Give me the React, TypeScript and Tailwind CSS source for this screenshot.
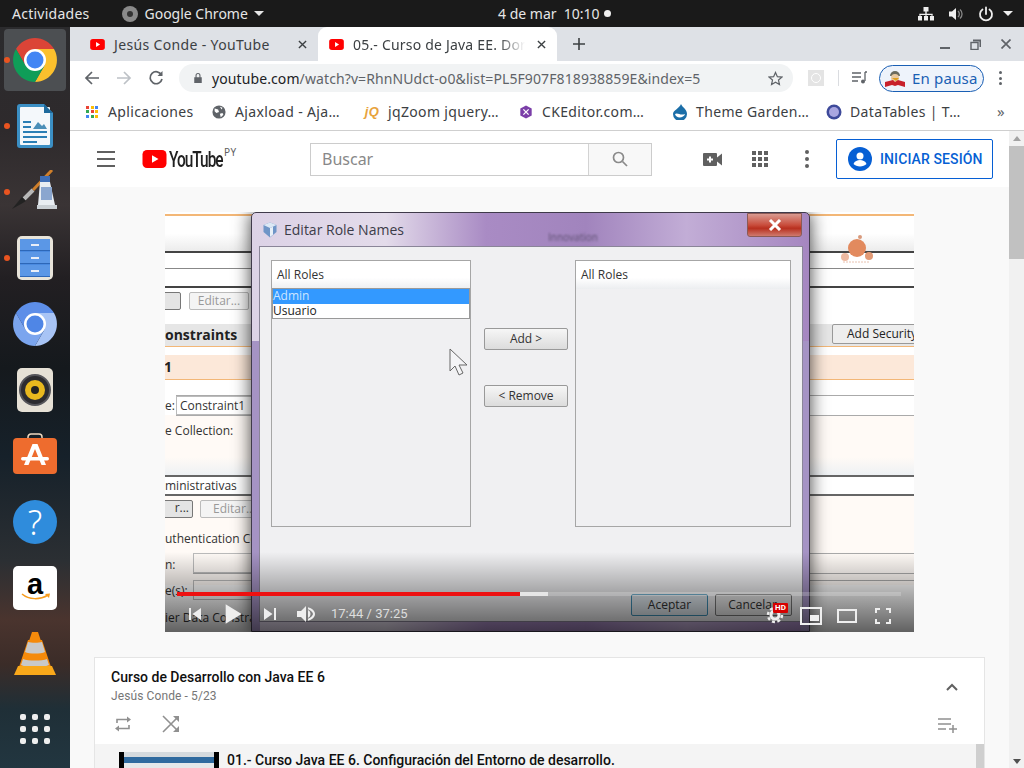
import type { ReactNode } from 'react';

const YtFavicon = ({ className = '' }: { className?: string }) => (
  <svg viewBox="0 0 16 12" className={className}>
    <rect width="16" height="12" rx="3" fill="#f00" />
    <path d="M6.4 3.2 10.8 6 6.4 8.8z" fill="#fff" />
  </svg>
);

const ChromeLogo = ({ colors, size }: { colors: string[]; size: number }) => (
  <svg viewBox="0 0 48 48" width={size} height={size}>
    <path d="M5 13A22 22 0 0 1 43 13L24 13 24 24 14.500 29.500Z" fill={colors[0]} />
    <path d="M43 13A22 22 0 0 1 24 46L33.500 29.500 24 24 24 13Z" fill={colors[1]} />
    <path d="M24 46A22 22 0 0 1 5 13L14.500 29.500 24 24 33.500 29.500Z" fill={colors[2]} />
    <circle cx="24" cy="24" r="11" fill="#fff" />
    <circle cx="24" cy="24" r="8.500" fill={colors[3]} />
  </svg>
);

function TopBar() {
  return (
    <div className="h-[27px] bg-[#1a1a1a] flex items-center text-[14px] text-[#e6e6e6] relative font-['Noto_Sans',sans-serif]">
      <span className="ml-3 tracking-[0.25px]">Actividades</span>
      <span className="ml-[33px] flex items-center">
        <span className="w-4 h-4 rounded-full bg-[#8a8a8a] flex items-center justify-center">
          <span className="w-[6px] h-[6px] rounded-full bg-[#333]" />
        </span>
        <span className="ml-[6px]">Google Chrome</span>
        <span className="ml-[6px] border-x-[5px] border-x-transparent border-t-[5px] border-t-[#e6e6e6]" />
      </span>
      <span className="absolute left-[498px] flex items-center">
        4 de mar&nbsp;&nbsp;10:10
        <span className="ml-[4px] w-[7px] h-[7px] rounded-full bg-[#eee]" />
      </span>
      <span className="ml-auto flex items-center mr-[11px]">
        <svg viewBox="0 0 16 14" className="w-4 h-[14px] fill-[#eee]">
          <path d="M5.500 0h5v4.500h-5zM7.300 4.500h1.400v2.300h6v2h-1.400v-.8H8.700v.8H7.300V8H2.700v.8H1.300v-2h6zM0 9h4v4.500H0zM6 9h4v4.500H6zM12 9h4v4.500h-4z" />
        </svg>
        <svg viewBox="0 0 16 16" className="w-4 h-4 ml-[14px]">
          <path d="M1 5.500h3L8 2v12L4 10.500H1z" fill="#eee" />
          <path d="M10 5a4 4 0 0 1 0 6M12 3.500a6 6 0 0 1 0 9" stroke="#888" strokeWidth="1.300" fill="none" />
        </svg>
        <svg viewBox="0 0 16 16" className="w-4 h-4 ml-[14px]" fill="none" stroke="#eee" strokeWidth="1.800" strokeLinecap="round">
          <path d="M8 1.500V8M4.500 3.500a6 6 0 1 0 7 0" />
        </svg>
        <span className="ml-[9px] border-x-[5px] border-x-transparent border-t-[5px] border-t-[#eee]" />
      </span>
    </div>
  );
}

function DockCell({ dot, children }: { dot?: boolean; children: ReactNode }) {
  return (
    <div className="h-[66px] flex items-center justify-center relative">
      {dot && <span className="absolute left-[4px] top-[30px] w-[6px] h-[6px] rounded-full bg-[#e95420]" />}
      {children}
    </div>
  );
}

function Dock() {
  return (
    <div className="w-[70px] flex flex-col shrink-0 bg-[linear-gradient(180deg,#2b2b2d_0%,#2e2a2c_14%,#3a3435_24%,#221f22_34%,#15191d_46%,#16212a_58%,#2b2f33_72%,#4a342e_80%,#3b2c28_86%,#1f2f37_92%,#223640_100%)]">
      <DockCell dot>
        <div className="w-[62px] h-[62px] rounded-[4px] bg-[#4c4f52] flex items-center justify-center">
          <ChromeLogo size={48} colors={['#db4437', '#fbc02d', '#0f9d58', '#4285f4']} />
        </div>
      </DockCell>
      <DockCell dot>
        <svg viewBox="0 0 36 44" className="w-9 h-11">
          <path d="M3 0h24l9 9v32a3 3 0 0 1-3 3H3a3 3 0 0 1-3-3V3a3 3 0 0 1 3-3z" fill="#3b8fc4" />
          <rect x="3" y="3" width="30" height="38" rx="1" fill="#f4f8fb" />
          <path d="M27 0l9 9h-9z" fill="#1e6a9c" />
          <path d="M6 17h8v2H6zM6 22h8v2H6zM6 27h24v2H6zM6 32h24v2H6zM6 37h14v2H6z" fill="#2b7fb5" />
          <path d="M16 25l5-7 4 4 2-2 3 5z" fill="#4b8fb8" />
        </svg>
      </DockCell>
      <DockCell dot>
        <svg viewBox="0 0 46 44" className="w-[46px] h-11">
          <path d="M40 0 21 20" stroke="#d07f2a" strokeWidth="3" fill="none" />
          <path d="M21 20 12 29" stroke="#b8b8b8" strokeWidth="4" fill="none" />
          <path d="M10 27l4 4-5 3-9 5z" fill="#222" />
          <rect x="28" y="6" width="10" height="6" fill="#3f6eb5" />
          <path d="M28 12h10l5 23H26z" fill="#e8edf2" />
          <rect x="29" y="17" width="11" height="13" fill="#8aa6cf" />
          <rect x="25" y="35" width="20" height="4" fill="#c9cfd4" />
        </svg>
      </DockCell>
      <DockCell dot>
        <div className="w-9 h-11 rounded-[5px] bg-[#e8e4da] p-[3px]">
          <div className="h-full rounded-[2px] bg-[#4a8ae0] flex flex-col gap-[1px]">
            {[0, 1, 2].map((i) => (
              <div key={i} className="flex-1 bg-[#5b97e6] border-b border-[#2d67b8] flex items-center justify-center">
                <span className="w-2 h-[2px] bg-[#e8eef8]" />
              </div>
            ))}
          </div>
        </div>
      </DockCell>
      <DockCell>
        <ChromeLogo size={48} colors={['#5d8ee8', '#a8c4f5', '#7ba5ee', '#4f86e6']} />
      </DockCell>
      <DockCell>
        <div className="w-9 h-[44px] rounded-[5px] bg-[#e6e1d6] flex items-center justify-center">
          <div className="w-8 h-8 rounded-full bg-[#2c2c30] border-2 border-[#55555a] flex items-center justify-center">
            <div className="w-5 h-5 rounded-full bg-[#e8b81e] flex items-center justify-center">
              <div className="w-[8px] h-[8px] rounded-full bg-[#222]" />
            </div>
          </div>
        </div>
      </DockCell>
      <DockCell>
        <svg viewBox="0 0 44 46" className="w-11 h-[46px]">
          <path d="M15 8V4a3 3 0 0 1 3-3h8a3 3 0 0 1 3 3v4" fill="none" stroke="#f0d9c0" strokeWidth="1.500" />
          <rect y="5" width="44" height="36" rx="4" fill="#ee6c2e" />
          <path d="M19.500 11h5L33 32h-4.500l-6.500-16-6.500 16H11z" fill="#fff" />
          <rect x="8" y="24" width="28" height="3.500" rx="1.700" fill="#fff" />
        </svg>
      </DockCell>
      <DockCell>
        <div className="w-11 h-11 rounded-full bg-[#2f8cdc] flex items-center justify-center text-white text-[34px] leading-none font-light font-['Noto_Sans',sans-serif]">
          ?
        </div>
      </DockCell>
      <DockCell>
        <div className="w-11 h-11 rounded-[5px] bg-white flex flex-col items-center justify-center relative">
          <span className="text-black font-bold text-[29px] leading-[26px] font-['Liberation_Sans',sans-serif] mt-[-8px]">a</span>
          <svg viewBox="0 0 30 8" className="w-[30px] h-2 absolute top-[27px] left-[8px]">
            <path d="M1 1c7 6 18 6 26 1" fill="none" stroke="#f79c1d" strokeWidth="1.500" />
            <path d="M24 1l5-.5-1 4.500z" fill="#f79c1d" />
          </svg>
        </div>
      </DockCell>
      <DockCell>
        <svg viewBox="0 0 42 44" className="w-[42px] h-11">
          <path d="M14 8h14l10 30H4z" fill="#f58a0b" />
          <path d="M18 0h6l3 9c-2 1-10 1-12 0z" fill="#f58a0b" />
          <path d="M14 10c3 1 11 1 14 0l3 10c-4 2-16 2-20 0z" fill="#c9c9c9" />
          <path d="M9 27c5 2 19 2 24 0l2 6c-6 3-22 3-28 0z" fill="#c9c9c9" />
          <path d="M4 34h34l4 9H0z" fill="#f9a81a" />
        </svg>
      </DockCell>
      <div className="mt-[10px] mx-auto grid grid-cols-3 gap-x-[6px] gap-y-[6px] pt-[17px]">
        {Array.from({ length: 9 }).map((_, i) => (
          <span key={i} className="w-[6px] h-[6px] rounded-[2px] bg-[#eee]" />
        ))}
      </div>
    </div>
  );
}

function TabStrip() {
  return (
    <div className="h-[34px] bg-[#dee1e6] flex items-stretch relative text-[14px] text-[#3c4043]">
      <div className="w-[248px] flex items-center pl-[20px] shrink-0">
        <YtFavicon className="w-[15px] h-[11px]" />
        <span className="ml-[9px] tracking-[0.35px]">Jesús Conde - YouTube</span>
        <svg viewBox="0 0 10 10" className="w-[9px] h-[9px] ml-[28px]" stroke="#3c4043" strokeWidth="1.500">
          <path d="M1 1l8 8M9 1l-8 8" />
        </svg>
      </div>
      <div className="w-[239px] bg-white rounded-t-[9px] flex items-center pl-[11px] shrink-0">
        <YtFavicon className="w-[15px] h-[11px]" />
        <span className="ml-[9px] w-[172px] whitespace-nowrap tracking-[0.2px] [mask-image:linear-gradient(90deg,#000_85%,transparent)]">
          05.- Curso de Java EE. Dor
        </span>
        <svg viewBox="0 0 10 10" className="w-[9px] h-[9px] ml-[12px]" stroke="#3c4043" strokeWidth="1.500">
          <path d="M1 1l8 8M9 1l-8 8" />
        </svg>
      </div>
      <svg viewBox="0 0 12 12" className="w-3 h-3 ml-[16px] self-center" stroke="#3c4043" strokeWidth="1.600">
        <path d="M6 0v12M0 6h12" />
      </svg>
      <div className="ml-auto flex items-center mr-[13px] gap-[20px]">
        <span className="w-[10px] h-[2px] bg-[#5f6368] mt-[7px]" />
        <svg viewBox="0 0 11 11" className="w-[11px] h-[11px]" fill="none" stroke="#5f6368" strokeWidth="1.400">
          <rect x="1" y="3.500" width="7" height="7" />
          <path d="M3 1.500h7.500V8" strokeWidth="2" />
        </svg>
        <svg viewBox="0 0 10 10" className="w-[10px] h-[10px]" stroke="#5f6368" strokeWidth="1.700">
          <path d="M.5.500l9 9M9.500.500l-9 9" />
        </svg>
      </div>
    </div>
  );
}

function Toolbar() {
  return (
    <div className="h-[34px] bg-white flex items-center text-[14px]">
      <svg viewBox="0 0 16 16" className="w-4 h-4 ml-[14px]" fill="none" stroke="#5f6368" strokeWidth="1.700">
        <path d="M15 8H2M8 2 2 8l6 6" />
      </svg>
      <svg viewBox="0 0 16 16" className="w-4 h-4 ml-[16px]" fill="none" stroke="#bdc1c6" strokeWidth="1.700">
        <path d="M1 8h13M8 2l6 6-6 6" />
      </svg>
      <svg viewBox="0 0 16 16" className="w-4 h-4 ml-[16px]" fill="none" stroke="#5f6368" strokeWidth="1.700">
        <path d="M13.500 5A6 6 0 1 0 14 9" />
        <path d="M14.500 1v5h-5z" fill="#5f6368" stroke="none" />
      </svg>
      <div className="ml-[15px] w-[614px] h-[28px] rounded-full bg-[#f1f3f4] flex items-center">
        <svg viewBox="0 0 12 14" className="w-[10px] h-[12px] ml-[14px]">
          <path d="M3 6V4a3 3 0 0 1 6 0v2h1.500v7h-9V6zm1.300 0h3.400V4a1.700 1.700 0 0 0-3.400 0z" fill="#5f6368" />
        </svg>
        <span className="ml-[9px] text-[#202124] tracking-[0.1px]">
          youtube.com<span className="text-[#5f6368]">/watch?v=RhnNUdct-o0&amp;list=PL5F907F818938859E&amp;index=5</span>
        </span>
        <svg viewBox="0 0 16 16" className="w-[15px] h-[15px] ml-auto mr-[10px]" fill="none" stroke="#5f6368" strokeWidth="1.300">
          <path d="M8 1.500 10 6l4.800.5-3.600 3.200 1 4.800L8 12l-4.200 2.500 1-4.800L1.200 6.500 6 6z" />
        </svg>
      </div>
      <div className="w-4 h-4 ml-[15px] bg-[#e4e4e4] flex items-center justify-center shrink-0">
        <span className="w-[10px] h-[10px] rounded-full border border-white" />
      </div>
      <span className="w-px h-4 bg-[#dadce0] ml-[14px]" />
      <svg viewBox="0 0 16 14" className="w-4 h-[14px] ml-[13px]" fill="none" stroke="#5f6368" strokeWidth="1.300">
        <path d="M0 2h9M0 6h9M0 10h6M13 1h2M13 1v9" />
        <circle cx="11" cy="10.500" r="2" fill="#5f6368" stroke="none" />
      </svg>
      <div className="ml-[11px] w-[105px] h-[27px] rounded-full border border-[#1a5fb4] bg-[#eef3fb] flex items-center">
        <svg viewBox="0 0 24 22" className="w-6 h-[22px] ml-[3px]">
          <path d="M7 9a5 5 0 0 1 10 0z" fill="#6b6b5e" />
          <circle cx="12" cy="11" r="4" fill="#e8c9a0" />
          <path d="M9 11h7l-3 3z" fill="#e0a020" />
          <path d="M2 15l8-2 2 2 3-2 7 2v5l-7-2-3 1-3-1-7 2z" fill="#c8202a" />
        </svg>
        <span className="ml-[5px] text-[15px] text-[#1a5fb4] tracking-[0.2px]">En pausa</span>
      </div>
      <div className="ml-[15px] flex flex-col gap-[2.500px]">
        {[0, 1, 2].map((i) => (
          <span key={i} className="w-[3px] h-[3px] rounded-full bg-[#5f6368]" />
        ))}
      </div>
    </div>
  );
}

function Bookmark({ w, icon, label }: { w: number; icon: ReactNode; label: string }) {
  return (
    <div className="flex items-center shrink-0 whitespace-nowrap" style={{ width: w }}>
      <span className="w-4 h-4 flex items-center justify-center shrink-0">{icon}</span>
      <span className="ml-[8px]">{label}</span>
    </div>
  );
}

function BookmarksBar() {
  const appColors = ['#ea4335', '#fbbc04', '#4285f4', '#34a853', '#ea4335', '#fbbc04', '#4285f4', '#34a853', '#fbbc04'];
  return (
    <div className="h-[36px] pb-[2px] bg-white border-b border-[#cfcfcf] flex items-center pl-[14px] text-[14px] text-[#3c4043] relative tracking-[0.35px]">
      <Bookmark
        w={127}
        icon={
          <span className="grid grid-cols-3 gap-[1.500px]">
            {appColors.map((c, i) => (
              <span key={i} className="w-[3px] h-[3px]" style={{ backgroundColor: c }} />
            ))}
          </span>
        }
        label="Aplicaciones"
      />
      <Bookmark
        w={153}
        icon={
          <svg viewBox="0 0 16 16" className="w-[14px] h-[14px]">
            <circle cx="8" cy="8" r="7.500" fill="#5f6368" />
            <path d="M3 4l4 1 1 3-3 1-2-2zM9 10l3-1 1 2-3 3zM9 2l3 1-1 2z" fill="#fff" />
          </svg>
        }
        label="Ajaxload - Aja…"
      />
      <Bookmark
        w={154}
        icon={
          <span className="text-[#e8a33d] text-[13px] font-bold italic font-['Liberation_Sans',sans-serif]">jQ</span>
        }
        label="jqZoom jquery…"
      />
      <Bookmark
        w={154}
        icon={
          <svg viewBox="0 0 16 16" className="w-[14px] h-[14px]">
            <path d="M8 .500 14.500 4v8L8 15.500 1.500 12V4z" fill="#7b3fa8" />
            <path d="M5 5l6 6M11 5l-6 6" stroke="#fff" strokeWidth="1.500" />
          </svg>
        }
        label="CKEditor.com…"
      />
      <Bookmark
        w={154}
        icon={
          <svg viewBox="0 0 16 16" className="w-4 h-4">
            <path d="M9 0c1 3 6 5 6 10a7 7 0 0 1-14 0c0-4 6-5 8-10z" fill="#1b6ea8" />
            <path d="M3 10c3-2 5 2 10 0-1 4-9 5-10 0z" fill="#fff" />
          </svg>
        }
        label="Theme Garden…"
      />
      <Bookmark
        w={150}
        icon={
          <svg viewBox="0 0 16 16" className="w-4 h-4">
            <circle cx="8" cy="8" r="7.500" fill="#3e4a9a" />
            <circle cx="8" cy="8" r="5" fill="#a9a6e0" />
          </svg>
        }
        label="DataTables | T…"
      />
      <span className="absolute left-[927px] top-[5px] text-[#5f6368] text-[15px]">»</span>
    </div>
  );
}

function YouTubeHeader() {
  return (
    <div className="h-[56px] bg-white flex items-center shrink-0 text-[#606060]">
      <div className="ml-[27px] flex flex-col gap-[5px]">
        {[0, 1, 2].map((i) => (
          <span key={i} className="w-[18px] h-[2px] bg-[#606060]" />
        ))}
      </div>
      <svg viewBox="0 0 24 18" className="w-[25px] h-[18px] ml-[27px]">
        <rect width="24" height="18" rx="4.500" fill="#f00" />
        <path d="M9.500 5.300 16 9l-6.500 3.700z" fill="#fff" />
      </svg>
      <span className="ml-[2px] w-[55px] whitespace-nowrap text-[22px] font-medium text-[#212121] tracking-[-1.400px] font-['Roboto',sans-serif] scale-x-[0.7] origin-left">YouTube</span>
      <span className="text-[10px] mb-[14px] w-[14px] tracking-[0.5px]">PY</span>
      <div className="ml-[72px] w-[342px] h-[33px] flex border border-[#ccc]">
        <div className="w-[277px] bg-white pl-[11px] text-[16px] text-[#888] flex items-center">Buscar</div>
        <div className="flex-1 bg-[#f8f8f8] border-l border-[#d3d3d3] flex items-center justify-center">
          <svg viewBox="0 0 16 16" className="w-4 h-4" fill="none" stroke="#8a8a8a" strokeWidth="1.700">
            <circle cx="6.500" cy="6.500" r="5" />
            <path d="M10.500 10.500 15 15" />
          </svg>
        </div>
      </div>
      <svg viewBox="0 0 19 13" className="w-[19px] h-[13px] ml-[51px]">
        <path d="M1 0h12a1 1 0 0 1 1 1v3.500L19 .500v12l-5-4V12a1 1 0 0 1-1 1H1a1 1 0 0 1-1-1V1a1 1 0 0 1 1-1z" fill="#606060" />
        <path d="M6 3.500h2V5.500h2v2H8v2H6v-2H4v-2h2z" fill="#fff" />
      </svg>
      <div className="ml-[30px] grid grid-cols-3 gap-[2px]">
        {Array.from({ length: 9 }).map((_, i) => (
          <span key={i} className="w-[4px] h-[4px] bg-[#606060]" />
        ))}
      </div>
      <div className="ml-[37px] flex flex-col gap-[3px]">
        {[0, 1, 2].map((i) => (
          <span key={i} className="w-[4px] h-[4px] rounded-full bg-[#606060]" />
        ))}
      </div>
      <div className="ml-[27px] w-[157px] h-[40px] border border-[#065fd4] rounded-[2px] flex items-center text-[#065fd4] font-medium text-[14px] font-['Roboto',sans-serif]">
        <svg viewBox="0 0 24 24" className="w-6 h-6 ml-[11px]">
          <circle cx="12" cy="12" r="12" fill="#065fd4" />
          <circle cx="12" cy="9" r="3.500" fill="#fff" />
          <path d="M5.500 17c1-3 4-4 6.500-4s5.500 1 6.500 4c-1.500 1.500-4 2.500-6.500 2.500S7 18.500 5.500 17z" fill="#fff" />
        </svg>
        <span className="ml-[8px] tracking-[0.1px]">INICIAR SESIÓN</span>
      </div>
    </div>
  );
}

const bgLines = [
  { top: 2, left: 0, cls: 'h-[1.500px] bg-[#f3b777]' },
  { top: 39, left: 0, cls: 'h-[2px] bg-[#444]' },
  { top: 56, left: 0, cls: 'h-px bg-[#888]' },
  { top: 74, left: 0, cls: 'h-[2px] bg-[#444]' },
  { top: 134, left: 0, cls: 'h-px bg-[#f3b777]' },
  { top: 167, left: 0, cls: 'h-px bg-[#f3b777]' },
  { top: 183, left: 11, cls: 'h-px bg-[#aaa]' },
  { top: 203, left: 11, cls: 'h-px bg-[#aaa]' },
  { top: 263, left: 0, cls: 'h-[2px] bg-[#666]' },
  { top: 282, left: 0, cls: 'h-[2px] bg-[#666]' },
  { top: 341, left: 28, cls: 'h-px bg-[#aaa]' },
  { top: 361, left: 28, cls: 'h-px bg-[#aaa]' },
  { top: 368, left: 28, cls: 'h-px bg-[#aaa]' },
];

function VideoBackground() {
  return (
    <div className="absolute inset-0 bg-white text-[12px] text-[#333] font-['Open_Sans',sans-serif] whitespace-nowrap overflow-hidden">
      <div className="absolute left-0 right-0 top-[4px] h-[35px] bg-[linear-gradient(180deg,#fff_50%,#ececec)]" />
      <div className="absolute left-0 right-0 top-[112px] h-[22px] bg-[#e6e6e6]" />
      <div className="absolute left-0 right-0 top-[143px] h-[24px] bg-[#fce8d9]" />
      <div className="absolute left-0 right-0 top-[203px] h-[60px] bg-[linear-gradient(180deg,#fffaf6,#fffaf6_70%,#eef1f4)]" />
      <div className="absolute left-0 right-0 top-[283px] h-[90px] bg-[#fffaf6]" />
      {bgLines.map((l) => (
        <div key={l.top} className={`absolute right-0 ${l.cls}`} style={{ top: l.top, left: l.left }} />
      ))}
      <div className="absolute left-[-10px] top-[80px] w-[26px] h-[18px] rounded-[2px] border border-[#777] bg-[#e4e4e4]" />
      <div className="absolute left-[24px] top-[80px] w-[60px] h-[18px] rounded-[2px] border border-[#bbb] bg-[#f4f4f4] text-[#999] leading-[16px] text-center">Editar...</div>
      <span className="absolute left-0 top-[112px] font-bold text-[14px] text-[#222]">onstraints</span>
      <span className="absolute left-[-1px] top-[144px] font-bold text-[14px] text-[#222]">1</span>
      <span className="absolute left-0 top-[185px]">e:</span>
      <div className="absolute left-[11px] top-[184px] w-[120px] h-[19px] border border-[#bbb] bg-white leading-[17px] pl-[3px]">Constraint1</div>
      <span className="absolute left-0 top-[210px]">e Collection:</span>
      <span className="absolute left-0 top-[265px]">ministrativas</span>
      <div className="absolute left-[-10px] top-[288px] w-[38px] h-[18px] rounded-[2px] border border-[#777] bg-[#e4e4e4] leading-[14px] text-right pr-[3px]">r...</div>
      <div className="absolute left-[35px] top-[288px] w-[60px] h-[18px] rounded-[2px] border border-[#bbb] bg-[#f4f4f4] text-[#999] leading-[16px] pl-[12px]">Editar...</div>
      <span className="absolute left-0 top-[318px]">uthentication Cor</span>
      <span className="absolute left-0 top-[344px]">n:</span>
      <div className="absolute left-[28px] top-[341px] w-[60px] h-[20px] border border-[#bbb]" />
      <span className="absolute left-0 top-[370px]">e(s):</span>
      <div className="absolute left-[28px] top-[368px] w-[60px] h-[20px] border border-[#bbb]" />
      <span className="absolute left-0 top-[397px]">ier Data Constra</span>
      <svg viewBox="0 0 34 34" className="absolute left-[675px] top-[22px] w-[34px] h-[34px]">
        <circle cx="17" cy="14" r="9" fill="#e28a5e" />
        <circle cx="20" cy="3" r="2" fill="#d99a7c" />
        <circle cx="29" cy="22" r="4" fill="#e29a75" />
        <circle cx="5" cy="23" r="4" fill="#eeb9a0" />
        <path d="M3 28h26" stroke="#e8c2b0" strokeDasharray="2 1" />
      </svg>
      <div className="absolute left-[667px] top-[112px] w-[90px] h-[20px] rounded-[2px] border border-[#999] bg-[#eee] leading-[18px] pl-[14px] text-[#222] overflow-hidden">Add Security</div>
    </div>
  );
}

function RoleList({ left, width, selected }: { left: number; width: number; selected?: boolean }) {
  return (
    <div className="absolute top-[13px] h-[267px] border border-[#a6a6a6] bg-[#f0f0f2]" style={{ left, width }}>
      <div className="h-[28px] bg-[linear-gradient(180deg,#fff_60%,#eceef0)] pl-[5px] flex items-center text-[12px] text-[#333]">All Roles</div>
      {selected && (
        <div className="border border-[#999] bg-white text-[12px] leading-[14px] -mt-px">
          <div className="bg-[#3399ff] text-[#cde6ff] h-[15px]">Admin</div>
          <div className="text-[#222] h-[14px]">Usuario</div>
        </div>
      )}
    </div>
  );
}

function DialogButton({ top, children }: { top: number; children: ReactNode }) {
  return (
    <div className="absolute left-[224px] w-[84px] h-[22px] rounded-[2px] border border-[#999] bg-[linear-gradient(180deg,#f6f6f6,#dcdcdc)] text-[12px] text-[#333] flex items-center justify-center" style={{ top }}>
      {children}
    </div>
  );
}

function Dialog() {
  return (
    <div className="absolute left-[86px] top-0 w-[559px] h-[420px] rounded-t-[5px] bg-[linear-gradient(90deg,#dcd2e6_0%,#e3dbea_24%,#a98bc4_42%,#a184bd_60%,#c2add6_78%,#a586c0_100%)] border border-[#3f3a4a] shadow-[0_0_18px_rgba(0,0,0,0.75)] font-['Open_Sans',sans-serif]">
      <div className="h-[33px] flex items-center pl-[10px]">
        <svg viewBox="0 0 16 16" className="w-4 h-4">
          <path d="M8 .500 14.500 3v7L8 15.500 1.500 10V3z" fill="#6f95c7" />
          <path d="M8 .500 14.500 3 8 6 1.500 3z" fill="#dce8f5" />
          <path d="M8 6l3 -1.300v8L8 15z" fill="#e8f0f8" />
        </svg>
        <span className="ml-[6px] text-[14px] text-[#3c3c48]">Editar Role Names</span>
        <span className="absolute left-[296px] top-[17px] text-[10px] text-[#5d4f70] blur-[1.200px]">Innovation</span>
      </div>
      <div className="absolute left-0 top-[128px] bottom-0 w-[8px] bg-[#a593c4]" />
      <div className="absolute right-0 top-[128px] bottom-0 w-[8px] bg-[#a593c4]" />
      <div className="absolute right-[7px] top-0 w-[55px] h-[24px] rounded-b-[3px] border border-[#8b5a55] bg-[linear-gradient(180deg,#d99a90_0%,#c94d3c_50%,#b8301f_65%,#cf7a6e)] flex items-center justify-center">
        <svg viewBox="0 0 14 12" className="w-[14px] h-3" stroke="#fff" strokeWidth="3">
          <path d="M2 1l10 10M12 1 2 11" />
        </svg>
      </div>
      <div className="absolute left-[7px] top-[33px] w-[544px] h-[376px] bg-[#f0f0f2] border border-[#8a8598]">
        <RoleList left={11} width={200} selected />
        <RoleList left={315} width={216} />
        <DialogButton top={81}>Add &gt;</DialogButton>
        <DialogButton top={138}>&lt; Remove</DialogButton>
        <div className="absolute left-[371px] top-[347px] w-[77px] h-[22px] rounded-[2px] border border-[#3d8fb5] bg-[#e0e8ee] text-[12px] text-[#333] flex items-center justify-center">Aceptar</div>
        <div className="absolute left-[455px] top-[347px] w-[77px] h-[22px] rounded-[2px] border border-[#777] bg-[#e8e8e8] text-[12px] text-[#333] flex items-center justify-center pr-[2px]">Cancelar</div>
        <svg viewBox="0 0 20 29" className="absolute left-[189px] top-[101px] w-5 h-[29px]">
          <path d="M1 1v22l5-5 4 9 4-2-4-8h8z" fill="#f4f4f6" stroke="#666" strokeWidth="1" />
        </svg>
      </div>
    </div>
  );
}

function PlayerControls() {
  return (
    <>
      <div className="absolute left-0 right-0 bottom-0 h-[80px] bg-[linear-gradient(180deg,transparent,rgba(0,0,0,0.62))]" />
      <div className="absolute left-[12px] top-[380px] w-[724px] h-[4px] bg-[rgba(255,255,255,0.2)]">
        <div className="absolute left-0 top-0 h-full w-[343px] bg-[#ee1111]" />
      </div>
      <div className="absolute left-[355px] top-[380px] h-[4px] w-[28px] bg-[rgba(235,235,235,0.9)]" />
      <div className="absolute left-0 right-0 top-[384px] h-[36px] flex items-center text-[#eee] font-['Roboto',sans-serif]">
        <svg viewBox="0 0 36 36" className="w-[36px] h-[36px] ml-[12px] shrink-0 fill-[#eee]">
          <path d="m12 12h2v12h-2zm3.500 6 8.500 6V12z" />
        </svg>
        <svg viewBox="0 0 36 36" className="w-[44px] h-[44px] ml-[-2px] shrink-0 fill-[#eee]">
          <path d="M12 26 25 18 12 10z" />
        </svg>
        <svg viewBox="0 0 36 36" className="w-[36px] h-[36px] ml-[-3px] shrink-0 fill-[#eee]">
          <path d="M12 24 20.500 18 12 12zM22 12v12h2V12z" />
        </svg>
        <svg viewBox="0 0 36 36" className="w-[36px] h-[36px] fill-[#eee] ml-[1px] shrink-0">
          <path d="M8 21h4l5 5V10l-5 5H8zM19 14v8c1.500-.7 2.500-2.200 2.500-4s-1-3.300-2.500-4zM19 11.300v2c2.900.9 5 3.500 5 4.700s-2.100 3.800-5 4.700v2c4-.9 7-3.500 7-6.700s-3-5.800-7-6.700z" />
        </svg>
        <span className="ml-[6px] text-[13px] text-[#ddd]">17:44 / 37:25</span>
      </div>
      <div className="absolute left-[600px] top-[392px] w-[20px] h-[20px]">
        <svg viewBox="0 0 20 20" className="w-5 h-5">
          <circle cx="10" cy="11" r="7" fill="none" stroke="#eee" strokeWidth="2.500" strokeDasharray="3 2.500" />
          <circle cx="10" cy="11" r="4" fill="none" stroke="#eee" strokeWidth="3" />
        </svg>
        <span className="absolute left-[8px] top-[-1px] h-[10px] px-[2px] rounded-[1px] bg-[#d70000] text-white text-[8px] leading-[10px] font-bold font-['Roboto',sans-serif]">HD</span>
      </div>
      <svg viewBox="0 0 22 18" className="absolute left-[635px] top-[395px] w-[22px] h-[18px]">
        <rect x="1" y="1" width="20" height="16" fill="none" stroke="#eee" strokeWidth="2" />
        <rect x="10" y="8" width="9" height="6" fill="#eee" />
      </svg>
      <div className="absolute left-[672px] top-[397px] w-[20px] h-[14px] border-2 border-[#eee]" />
      <svg viewBox="0 0 16 16" className="absolute left-[710px] top-[396px] w-4 h-4" fill="none" stroke="#eee" strokeWidth="2">
        <path d="M1 5V1h4M11 1h4v4M15 11v4h-4M5 15H1v-4" />
      </svg>
    </>
  );
}

function Playlist() {
  return (
    <div className="mt-[25px] mx-auto w-[891px] shrink-0 border border-[#e5e5e5] bg-white font-['Roboto',sans-serif]">
      <div className="h-[86px] relative pl-4 pt-[11px]">
        <div className="text-[14px] font-medium text-[#0f0f0f] leading-[17px]">Curso de Desarrollo con Java EE 6</div>
        <div className="text-[12px] text-[#767676] leading-[16px] mt-[2px] tracking-[0.1px]">Jesús Conde - 5/23</div>
        <div className="flex items-center mt-[11px] ml-[3px]">
          <svg viewBox="0 0 18 18" className="w-[18px] h-[18px]" fill="none" stroke="#909090" strokeWidth="1.600">
            <path d="M3 8V4.500h11M3 13.500h12V10" />
            <path d="M13 1.500 17 4.500l-4 3zM5 10.500l-4 3 4 3z" fill="#909090" stroke="none" />
          </svg>
          <svg viewBox="0 0 18 18" className="w-[18px] h-[18px] ml-[30px]" fill="none" stroke="#909090" strokeWidth="1.600">
            <path d="M1 1l15 15M1 17 16 2" />
            <path d="M11 1h6v6zM11 17h6v-6z" fill="#909090" stroke="none" />
          </svg>
        </div>
        <svg viewBox="0 0 12 8" className="absolute right-[26px] top-[25px] w-3 h-2" fill="none" stroke="#606060" strokeWidth="2">
          <path d="M1 7l5-5 5 5" />
        </svg>
        <svg viewBox="0 0 20 16" className="absolute right-[26px] top-[59px] w-5 h-4" fill="none" stroke="#909090" strokeWidth="1.500">
          <path d="M0 2h13M0 7h13M0 12h8M15 8v8M11 12h8" />
        </svg>
      </div>
      <div className="h-[60px] bg-[#f4f4f4] flex items-start pl-[24px] pt-[8px] relative">
        <div className="w-[100px] h-[56px] bg-black px-[5px] shrink-0">
          <div className="h-full bg-[linear-gradient(180deg,#d5dade_0px,#d5dade_5px,#2f6a9f_5px,#2f6a9f_11px,#e4e8ea_11px)]" />
        </div>
        <span className="ml-[8px] text-[14px] font-medium text-[#0f0f0f] leading-[17px]">01.- Curso Java EE 6. Configuración del Entorno de desarrollo.</span>
        <div className="absolute right-0 top-0 w-2 h-full bg-[#cfcfcf]" />
      </div>
    </div>
  );
}

export default function App() {
  return (
    <div className="w-[1024px] h-[768px] overflow-hidden flex flex-col font-['Noto_Sans',sans-serif]">
      <TopBar />
      <div className="flex flex-1 min-h-0">
        <Dock />
        <div className="flex-1 min-w-0 flex flex-col">
          <TabStrip />
          <Toolbar />
          <BookmarksBar />
          <div className="flex flex-1 min-h-0">
            <div className="flex-1 min-w-0 bg-[#f9f9f9] flex flex-col overflow-hidden">
              <YouTubeHeader />
              <div className="mt-[25px] mx-auto w-[749px] h-[420px] relative shrink-0 overflow-hidden">
                <VideoBackground />
                <Dialog />
                <PlayerControls />
              </div>
              <Playlist />
            </div>
            <div className="w-[15px] bg-[#f1f1f1] shrink-0 flex flex-col items-center relative">
              <span className="mt-[5px] border-x-[4px] border-x-transparent border-b-[5px] border-b-[#a3a3a3]" />
              <div className="absolute left-0 top-[15px] w-full h-[113px] bg-[#c1c1c1]" />
              <span className="mt-auto mb-[4px] border-x-[4px] border-x-transparent border-t-[5px] border-t-[#505050]" />
            </div>
          </div>
        </div>
      </div>
    </div>
  );
}
